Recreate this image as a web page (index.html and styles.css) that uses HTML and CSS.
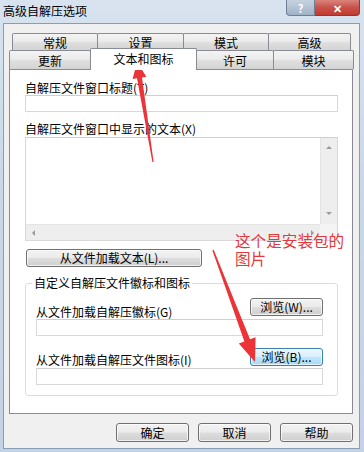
FILE: index.html
```html
<!DOCTYPE html>
<html lang="zh-CN">
<head>
    <meta charset="UTF-8">
    <title>高级自解压选项</title>
    <link rel="stylesheet" href="styles.css">
</head>
<body>
    <div class="window">
        <div class="titlebar">
            <span class="title">高级自解压选项</span>
            <div class="caption-btns">
                <span class="cap-help">?</span>
                <span class="cap-close">✕</span>
            </div>
        </div>

        <div class="client">
            <!-- tab strip, two rows -->
            <div class="tabs">
                <div class="tab-row row1">
                    <div class="tab w86">常规</div>
                    <div class="tab w87">设置</div>
                    <div class="tab w86">模式</div>
                    <div class="tab w83">高级</div>
                </div>
                <div class="tab-row row2">
                    <div class="tab w82">更新</div>
                    <div class="tab w107 active">文本和图标</div>
                    <div class="tab w78">许可</div>
                    <div class="tab w81">模块</div>
                </div>
            </div>

            <div class="panel">
                <div class="label first">自解压文件窗口标题(T)</div>
                <div class="edit"></div>

                <div class="label second">自解压文件窗口中显示的文本(X)</div>
                <div class="memo">
                    <div class="memo-text"></div>
                    <div class="vscroll">
                        <span class="arr arr-up"></span>
                        <span class="arr arr-down"></span>
                    </div>
                    <div class="hscroll">
                        <span class="arr arr-left"></span>
                        <span class="arr arr-right"></span>
                    </div>
                    <div class="corner"></div>
                </div>

                <button class="btn load-text">从文件加载文本(L)...</button>

                <fieldset class="group">
                    <legend>自定义自解压文件徽标和图标</legend>
                    <div class="browse-row">
                        <span class="row-label">从文件加载自解压徽标(G)</span>
                        <button class="btn browse">浏览(W)...</button>
                    </div>
                    <div class="edit"></div>
                    <div class="browse-row second-row">
                        <span class="row-label">从文件加载自解压文件图标(I)</span>
                        <button class="btn browse hot">浏览(B)...</button>
                    </div>
                    <div class="edit last"></div>
                </fieldset>
            </div>

            <div class="dialog-btns">
                <button class="btn cmd">确定</button>
                <button class="btn cmd">取消</button>
                <button class="btn cmd">帮助</button>
            </div>
        </div>

        <!-- red annotations drawn over the screenshot -->
        <svg class="marks" width="364" height="452" viewBox="0 0 364 452">
            <polygon fill="#ec3338" points="137,62 146.4,76.7 142,77.4 153.6,162 152.4,162 137,78.2 132.6,78.9"/>
            <polygon fill="#ec3338" points="255,362 255.6,337.2 250,339.3 213.6,249.4 212.4,250.6 244.4,341.5 238.8,343.6"/>
        </svg>
        <div class="note">这个是安装包的<br>图片</div>
    </div>
</body>
</html>
```

FILE: styles.css
```css
body {
    margin: 0;
    font-family: "Noto Sans CJK SC", "Liberation Sans", sans-serif;
    font-size: 12px;
    color: #000;
}
.window {
    position: relative;
    width: 364px;
    height: 452px;
    overflow: hidden;
    background: linear-gradient(180deg, #d8e3ef 0%, #c9d8e8 40%, #c3d3e5 100%);
}
.titlebar {
    display: flex;
    height: 23px;
}
.title {
    padding: 3px 0 0 3px;
    line-height: 16px;
    font-size: 12px;
}
.caption-btns {
    display: flex;
    margin-left: auto;
    margin-right: 4px;
    height: 16px;
}
.cap-help, .cap-close {
    display: flex;
    justify-content: center;
    align-items: center;
    height: 15px;
    color: #fff;
    font-weight: bold;
    border: 1px solid #6d7f96;
    border-top: none;
}
.cap-help {
    width: 27px;
    background: linear-gradient(180deg, #c5d2e0, #b4c3d4 50%, #9fb1c6);
    border-radius: 0 0 0 4px;
    font-size: 11px;
}
.cap-close {
    width: 44px;
    border-left: none;
    border-color: #8a3a35;
    background: linear-gradient(180deg, #d9847c, #c9524a 50%, #c23a30);
    border-radius: 0 0 4px 0;
    font-size: 11px;
}
.client {
    margin: 0 4px 0 3px;
    height: 426px;
    box-sizing: border-box;
    border: 1px solid #8b9db3;
    background: #f0f0f0;
    padding: 9px 0 0 5px;
}
.tabs {
    width: 344px;
}
.tab-row {
    display: flex;
}
.row1 {
    margin-left: 3px;
    height: 17px;
}
.row2 {
    height: 19px;
    align-items: flex-start;
}
.tab {
    box-sizing: border-box;
    margin-right: -1px;
    border: 1px solid #898c95;
    border-bottom: none;
    border-radius: 2px 2px 0 0;
    background: linear-gradient(180deg, #f3f3f3, #ebebeb 45%, #dedede 55%, #d4d4d4);
    text-align: center;
}
.row1 .tab {
    height: 17px;
    line-height: 17px;
}
.row2 .tab {
    height: 19px;
    line-height: 19px;
}
.row2 .tab.active {
    position: relative;
    z-index: 2;
    height: 22px;
    margin-top: -2px;
    line-height: 19px;
    background: #fff;
}
.w78 { width: 78px; }
.w81 { width: 81px; }
.w82 { width: 82px; }
.w83 { width: 83px; }
.w86 { width: 86px; }
.w87 { width: 87px; }
.w107 { width: 107px; }
.panel {
    box-sizing: border-box;
    width: 344px;
    height: 345px;
    border: 1px solid #898c95;
    background: #fff;
    padding: 0 14px 0 15px;
}
.label {
    line-height: 14px;
    white-space: nowrap;
}
.label.first {
    margin-top: 11px;
}
.label.second {
    margin-top: 10px;
}
.edit {
    box-sizing: border-box;
    height: 17px;
    border: 1px solid #d9d9d9;
    border-top-color: #cfcfcf;
    background: #fff;
}
.edit.last {
    margin-top: 1px;
}
.memo {
    box-sizing: border-box;
    margin-top: 1px;
    height: 104px;
    border: 1px solid #d9d9d9;
    border-top-color: #cfcfcf;
    display: grid;
    grid-template-columns: 1fr 17px;
    grid-template-rows: 1fr 16px;
}
.vscroll {
    display: flex;
    flex-direction: column;
    justify-content: space-between;
    align-items: center;
    padding: 8px 0 9px;
    background: #eeeeee;
    border-left: 1px solid #e4e4e4;
}
.hscroll {
    display: flex;
    justify-content: space-between;
    align-items: center;
    padding: 0 6px;
    background: #eeeeee;
    border-top: 1px solid #e4e4e4;
}
.corner {
    background: #f4f4f4;
}
.arr {
    width: 0;
    height: 0;
    border: 3px solid transparent;
}
.arr-up {
    border-top: none;
    border-bottom-color: #9a9a9a;
}
.arr-down {
    border-bottom: none;
    border-top-color: #9a9a9a;
}
.arr-left {
    border-left: none;
    border-right-color: #9a9a9a;
}
.arr-right {
    border-right: none;
    border-left-color: #9a9a9a;
}
.btn {
    box-sizing: border-box;
    padding: 0;
    font-family: inherit;
    font-size: 12px;
    color: #000;
    border: 1px solid #707070;
    border-radius: 3px;
    background: linear-gradient(180deg, #f2f2f2, #ebebeb 48%, #dddddd 52%, #cfcfcf);
    box-shadow: inset 0 0 0 1px rgba(255, 255, 255, 0.7);
    white-space: nowrap;
}
.load-text {
    display: block;
    margin: 8px 0 0 1px;
    width: 176px;
    height: 18px;
    line-height: 16px;
}
.group {
    margin: 9px 0 0;
    padding: 8px 14px 10px 10px;
    min-width: 0;
    border: 1px solid #d5dfe5;
    border-radius: 3px;
}
.group legend {
    padding: 0 2px;
    margin-left: -4px;
    line-height: 14px;
}
.browse-row {
    display: flex;
    justify-content: space-between;
    align-items: flex-start;
}
.row-label {
    margin-top: 7px;
    line-height: 14px;
}
.second-row {
    margin-top: 12px;
}
.second-row .row-label {
    margin-top: 5px;
}
.browse {
    width: 73px;
    height: 18px;
    line-height: 16px;
}
.browse.hot {
    border-color: #3c7fb1;
    background: linear-gradient(180deg, #eaf6fd, #d9f0fc 48%, #bee6fd 52%, #a7d9f5);
}
.dialog-btns {
    display: flex;
    justify-content: flex-end;
    gap: 9px;
    width: 344px;
    margin-top: 9px;
}
.cmd {
    width: 73px;
    height: 19px;
    line-height: 17px;
}
.marks {
    position: absolute;
    left: 0;
    top: 0;
    pointer-events: none;
}
.note {
    position: absolute;
    left: 235px;
    top: 231px;
    font-size: 15.6px;
    line-height: 18px;
    color: #e4383d;
}
```
